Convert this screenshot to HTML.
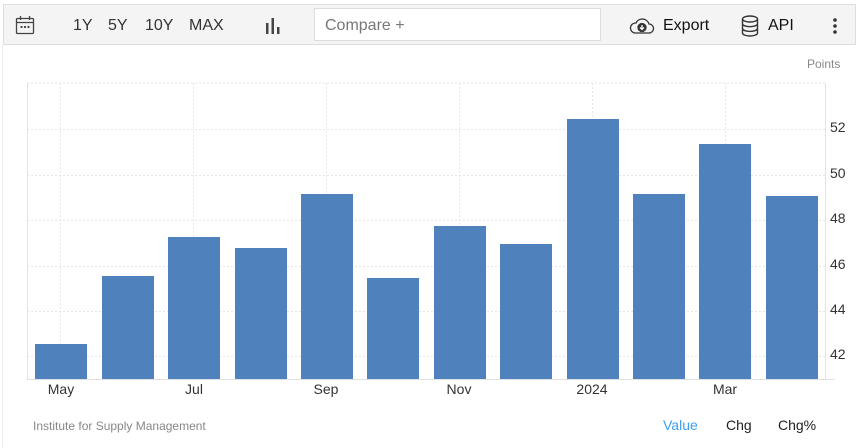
<!DOCTYPE html>
<html><head><style>
body{margin:0;width:856px;height:448px;background:#fff;font-family:"Liberation Sans",sans-serif;position:relative;overflow:hidden}
.tb{position:absolute;left:3px;top:4px;width:853px;height:41px;background:#f4f4f4;border:1px solid #ddd;box-sizing:border-box}
.t{position:absolute;font-size:16px;color:#333}
.cmp{position:absolute;left:314px;top:8px;width:287px;height:33px;background:#fff;border:1px solid #ddd;box-sizing:border-box;font-size:16px;color:#777;padding:8px 10px}
</style></head><body>
<div class="tb"></div>
<svg style="position:absolute;left:15px;top:15px" width="20" height="20" viewBox="0 0 20 20" fill="none" stroke="#444" stroke-width="1.3"><rect x="1.5" y="3.5" width="17" height="15" rx="1"/><line x1="1.5" y1="7.5" x2="18.5" y2="7.5"/><line x1="5.5" y1="1" x2="5.5" y2="5"/><line x1="14.5" y1="1" x2="14.5" y2="5"/><circle cx="6.5" cy="12" r=".5" fill="#444"/><circle cx="10" cy="12" r=".5" fill="#444"/><circle cx="13.5" cy="12" r=".5" fill="#444"/></svg>
<div class="t" style="left:73px;top:17px">1Y</div>
<div class="t" style="left:108px;top:17px">5Y</div>
<div class="t" style="left:145px;top:17px">10Y</div>
<div class="t" style="left:189px;top:17px">MAX</div>
<svg style="position:absolute;left:265px;top:18px" width="16" height="16"><rect x="1" y="5" width="2.5" height="11" fill="#444"/><rect x="6.5" y="0" width="2.5" height="16" fill="#444"/><rect x="12" y="9" width="2.5" height="7" fill="#444"/></svg>
<div class="cmp">Compare +</div>
<svg style="position:absolute;left:629px;top:16px" width="26" height="20" viewBox="0 0 26 20" fill="none" stroke="#333" stroke-width="1.3"><path d="M6 17H20a4.5 4.5 0 0 0 0-9 7 7 0 0 0-13-1 5 5 0 0 0-1 10z"/><circle cx="13" cy="11.5" r="4" fill="#333"/><path d="M13 9v4M11 11.5l2 2 2-2" stroke="#fff"/></svg>
<div class="t" style="left:663px;top:17px;color:#111">Export</div>
<svg style="position:absolute;left:741px;top:15px" width="18" height="22" viewBox="0 0 18 22" fill="none" stroke="#333" stroke-width="1.4"><ellipse cx="9" cy="4" rx="7.5" ry="3"/><path d="M1.5 4v14c0 1.7 3.4 3 7.5 3s7.5-1.3 7.5-3V4M1.5 8.7c0 1.7 3.4 3 7.5 3s7.5-1.3 7.5-3M1.5 13.4c0 1.7 3.4 3 7.5 3s7.5-1.3 7.5-3"/></svg>
<div class="t" style="left:768px;top:17px;color:#111">API</div>
<svg style="position:absolute;left:832px;top:17px" width="6" height="18"><circle cx="3" cy="3" r="1.8" fill="#333"/><circle cx="3" cy="9" r="1.8" fill="#333"/><circle cx="3" cy="15" r="1.8" fill="#333"/></svg>
<div style="position:absolute;left:2px;top:45px;width:1px;height:403px;background:#eee"></div>
<div style="position:absolute;left:807px;top:57px;font-size:12px;color:#888">Points</div>
<svg style="position:absolute;left:0;top:0" width="856" height="448" font-family="Liberation Sans, sans-serif">
<g stroke="#e6e6e6" stroke-dasharray="2,2" stroke-width="1">
<line x1="27" y1="83" x2="825" y2="83"/><line x1="27" y1="129.5" x2="825" y2="129.5"/><line x1="27" y1="175.5" x2="825" y2="175.5"/><line x1="27" y1="220.5" x2="825" y2="220.5"/><line x1="27" y1="266.5" x2="825" y2="266.5"/><line x1="27" y1="311.5" x2="825" y2="311.5"/><line x1="27" y1="356.5" x2="825" y2="356.5"/>
<line x1="60.5" y1="83" x2="60.5" y2="379"/><line x1="193.5" y1="83" x2="193.5" y2="379"/><line x1="326.5" y1="83" x2="326.5" y2="379"/><line x1="459.5" y1="83" x2="459.5" y2="379"/><line x1="592.5" y1="83" x2="592.5" y2="379"/><line x1="725.5" y1="83" x2="725.5" y2="379"/>
</g>
<line x1="27.5" y1="83" x2="27.5" y2="379" stroke="#e4e4e4"/>
<line x1="825.5" y1="83" x2="825.5" y2="379" stroke="#e4e4e4"/>
<line x1="27" y1="379.5" x2="835" y2="379.5" stroke="#e0e0e0"/>
<g fill="#4f81bd">
<rect x="35" y="344" width="52" height="35"/><rect x="102" y="276" width="52" height="103"/><rect x="168" y="237" width="52" height="142"/><rect x="235" y="248" width="52" height="131"/><rect x="301" y="194" width="52" height="185"/><rect x="367" y="278" width="52" height="101"/><rect x="434" y="226" width="52" height="153"/><rect x="500" y="244" width="52" height="135"/><rect x="567" y="119" width="52" height="260"/><rect x="633" y="194" width="52" height="185"/><rect x="699" y="144" width="52" height="235"/><rect x="766" y="196" width="52" height="183"/>
</g>
<g font-size="14" fill="#333">
<text x="830" y="132">52</text><text x="830" y="178">50</text><text x="830" y="223">48</text><text x="830" y="269">46</text><text x="830" y="314">44</text><text x="830" y="359">42</text>
</g>
<g font-size="14" fill="#333" text-anchor="middle">
<text x="61" y="394">May</text><text x="194" y="394">Jul</text><text x="326" y="394">Sep</text><text x="459" y="394">Nov</text><text x="592" y="394">2024</text><text x="725" y="394">Mar</text>
</g>
<text x="33" y="430" font-size="12" fill="#888">Institute for Supply Management</text>
<text x="663" y="430" font-size="14" fill="#3c9df5">Value</text>
<text x="726" y="430" font-size="14" fill="#222">Chg</text>
<text x="778" y="430" font-size="14" fill="#222">Chg%</text>
</svg>
</body></html>
